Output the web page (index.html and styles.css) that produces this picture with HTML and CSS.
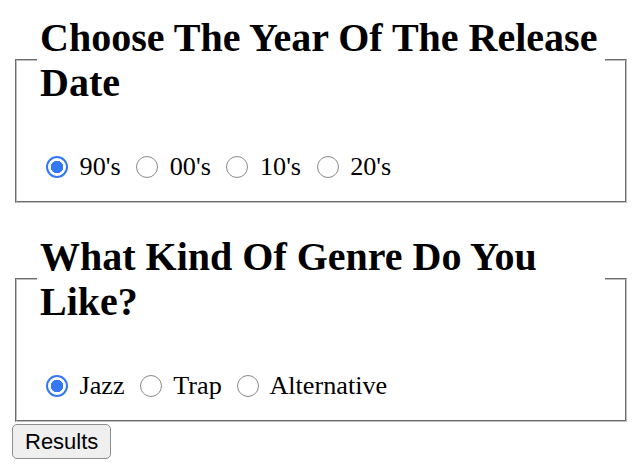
FILE: index.html
```html
<!DOCTYPE html>
<html>
<head>
<meta charset="utf-8">
<link rel="stylesheet" href="styles.css">
</head>
<body>
<form class="quiz">
  <fieldset class="group">
    <legend class="group-legend"><h2 class="group-title">Choose The Year Of The Release Date</h2></legend>
    <div class="options">
      <input class="radio" type="radio" name="year" id="y90" checked> <label for="y90">90's</label>
      <input class="radio" type="radio" name="year" id="y00"> <label for="y00">00's</label>
      <input class="radio" type="radio" name="year" id="y10"> <label for="y10">10's</label>
      <input class="radio" type="radio" name="year" id="y20"> <label for="y20">20's</label>
    </div>
  </fieldset>
  <div class="spacer"></div>
  <fieldset class="group">
    <legend class="group-legend"><h2 class="group-title">What Kind Of Genre Do You Like?</h2></legend>
    <div class="options">
      <input class="radio" type="radio" name="genre" id="gj" checked> <label for="gj">Jazz</label>
      <input class="radio" type="radio" name="genre" id="gt"> <label for="gt">Trap</label>
      <input class="radio" type="radio" name="genre" id="ga"> <label for="ga">Alternative</label>
    </div>
  </fieldset>
  <button class="submit" type="button">Results</button>
</form>
</body>
</html>
```

FILE: styles.css
```css
html, body {
  background: #fff;
}
body {
  margin: 0;
  padding: 12px 12px 0;
  font-family: "Liberation Serif", "Times New Roman", serif;
  font-size: 26.2px;
  color: #000;
}
.quiz {
  margin: 0;
}
.group {
  margin: 3px 3px 2px;
  border: 2px groove #c0c0c0;
  padding: 0 20px 19px;
  min-width: 0;
}
.group-legend {
  padding: 0 3px;
}
.group-title {
  margin: 0;
  font-size: 40px;
  line-height: 45px;
  font-weight: bold;
}
.options {
  margin-top: 47px;
  line-height: 30px;
  height: 30px;
  white-space: nowrap;
}
.spacer {
  height: 26px;
}
.radio {
  appearance: none;
  -webkit-appearance: none;
  box-sizing: border-box;
  width: 22px;
  height: 22px;
  margin: 0 5px 0 9px;
  border: 1.5px solid #8a8a8a;
  border-radius: 50%;
  background: #fff;
  vertical-align: -3px;
}
.radio:checked {
  border: 2.5px solid #3478f6;
  background: radial-gradient(circle, #3478f6 0 6px, #fff 6.5px);
}
.submit {
  display: block;
  margin: 0;
  height: 35px;
  padding: 0 12px;
  font-family: "Liberation Sans", Arial, sans-serif;
  font-size: 22px;
  color: #000;
  background: #efefef;
  border: 1px solid #8d8d8d;
  border-radius: 5px;
}
```
